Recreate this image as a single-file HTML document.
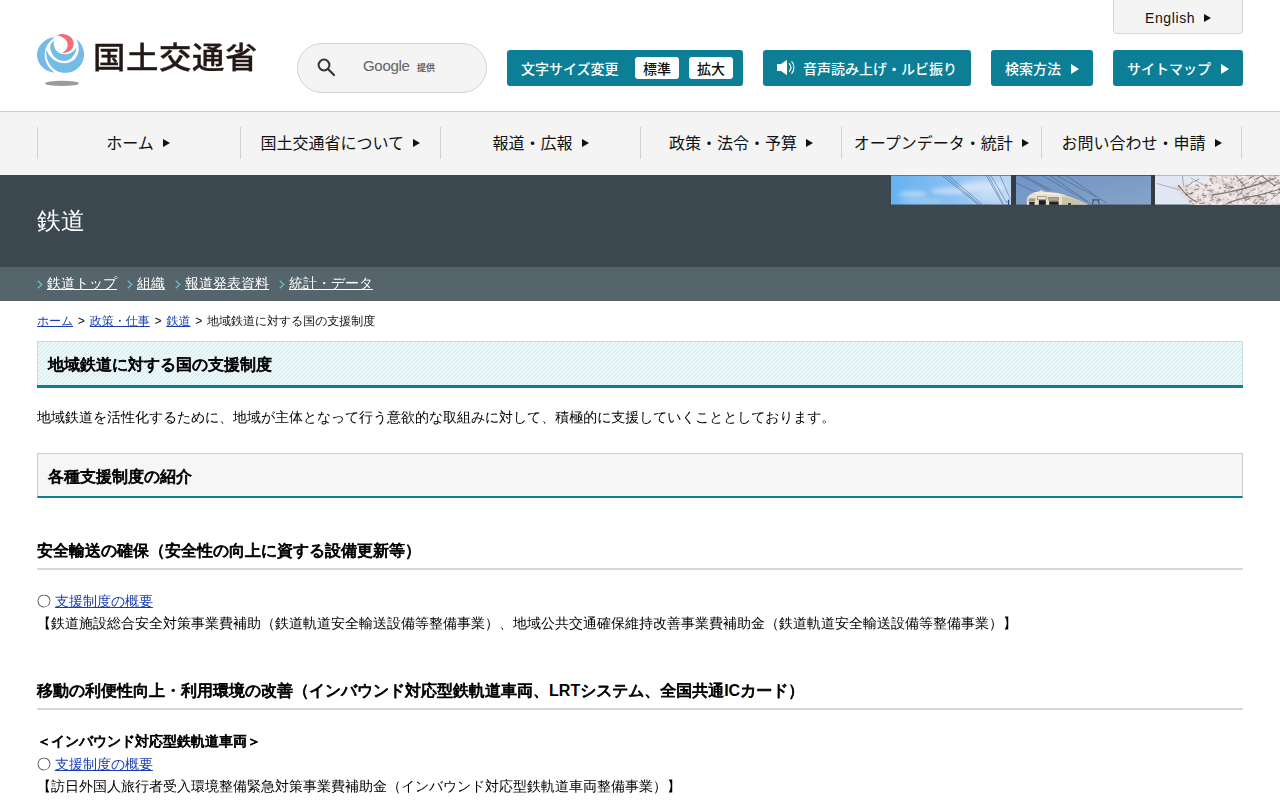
<!DOCTYPE html>
<html lang="ja">
<head>
<meta charset="utf-8">
<title>鉄道：地域鉄道に対する国の支援制度 - 国土交通省</title>
<style>
*{box-sizing:border-box;margin:0;padding:0}
html,body{width:1280px;height:800px;overflow:hidden;background:#fff}
body{font-family:"Liberation Sans","WenQuanYi Zen Hei",sans-serif;font-size:14px;color:#000;position:relative}
a{color:#1a3eaf;text-decoration:underline}
.noto{font-family:"Liberation Sans","Noto Sans CJK JP",sans-serif}

/* ---------- header ---------- */
#hd{position:absolute;left:0;top:0;width:1280px;height:111px;background:#fff}
#logo{position:absolute;left:37px;top:30px;width:225px;height:60px}
#logotxt{position:absolute;left:93px;top:35.6px;font-family:"Liberation Sans","Noto Sans CJK JP",sans-serif;font-weight:500;font-size:32.4px;line-height:46px;color:#231815;letter-spacing:.6px;white-space:nowrap;transform:scaleY(.93);transform-origin:0 0;-webkit-text-stroke:.35px #231815}
#search{position:absolute;left:297px;top:43px;width:190px;height:50px;border:1px solid #d2d2d2;border-radius:25px;background:#f4f4f4}
#search svg{position:absolute;left:17.6px;top:13.4px}
#search .g{position:absolute;left:65px;top:12px;font-family:"Liberation Sans",sans-serif;font-size:15px;line-height:20px;color:#5f6368;letter-spacing:-.3px}
#search .t{position:absolute;left:119px;top:16px;font-family:"Liberation Sans","Noto Sans CJK JP",sans-serif;font-size:9px;font-weight:700;line-height:16px;color:#5f6368}
.btn{position:absolute;top:50px;height:36px;background:#0c7f96;border-radius:3px;color:#fff;font-family:"Liberation Sans","Noto Sans CJK JP",sans-serif;font-size:14px;font-weight:500;line-height:38px;white-space:nowrap}
.btn .tri{display:inline-block;width:0;height:0;border-left:8px solid #fff;border-top:5px solid transparent;border-bottom:5px solid transparent;vertical-align:middle;margin-left:10px;position:relative;top:-1px}
#fs{left:507px;width:236px}
#fs .lb{position:absolute;left:14px;top:0}
#fs .b{position:absolute;top:7px;width:44px;height:22px;background:#fff;border-radius:3px;color:#111;font-size:14px;line-height:24px;text-align:center;font-weight:500}
#au{left:763px;width:208px}
#au svg{position:absolute;left:13px;top:8px}
#au .lb{position:absolute;left:40px;top:0}
#sm{left:991px;width:102px;padding-left:14px}
#mp{left:1113px;width:130px;padding-left:14px}
#en{position:absolute;left:1113px;top:-1px;width:130px;height:35px;background:#f4f4f4;border:1px solid #d6d6d6;border-radius:0 0 3px 3px;font-family:"Liberation Sans","Noto Sans CJK JP",sans-serif;font-size:14px;line-height:37px;color:#111;padding-left:31px;letter-spacing:.6px}
#en .tri{display:inline-block;width:0;height:0;border-left:7px solid #111;border-top:4px solid transparent;border-bottom:4px solid transparent;vertical-align:middle;margin-left:9px;position:relative;top:-1px}

/* ---------- global nav ---------- */
#gn{position:absolute;left:0;top:111px;width:1280px;height:64px;background:#f4f4f4;border-top:1px solid #cfcfcf}
#gn ul{position:absolute;left:37.3px;top:15px;width:1205px;height:32px;list-style:none;display:flex}
#gn li:last-child{border-right:1px solid #d2d2d2}
#gn li:first-child{padding-right:2px}
#gn li{flex:1 1 0;height:32px;border-left:1px solid #d2d2d2;text-align:center;font-family:"Liberation Sans","Noto Sans CJK JP",sans-serif;font-size:16px;line-height:33px;color:#111;white-space:nowrap}
#gn li .tri{display:inline-block;width:0;height:0;border-left:7px solid #111;border-top:4px solid transparent;border-bottom:4px solid transparent;vertical-align:middle;margin-left:9px;position:relative;top:-2px}

/* ---------- title band ---------- */
#tb{position:absolute;left:0;top:175px;width:1280px;height:92px;background:#3c484f}
#tb h1{position:absolute;left:37px;top:30px;font-size:24px;line-height:32px;font-weight:400;color:#fff}
#ph{position:absolute;left:891px;top:0;width:389px;height:30px}
#sn{position:absolute;left:0;top:267px;width:1280px;height:34px;background:#56646b;color:#fff;font-size:14px;line-height:34px;white-space:nowrap}
#sn a{color:#fff;position:absolute;top:-1px}
#sn .cv{position:absolute;top:12.6px;width:6px;height:9px;margin-left:-.5px}
#sn .cv path{fill:none;stroke:#5cc6d3;stroke-width:1.2}

/* ---------- content ---------- */
#bc{position:absolute;left:37px;top:312px;font-size:12px;line-height:18px;white-space:nowrap;color:#111;word-spacing:1.5px}
#h1{position:absolute;left:37px;top:341px;width:1206px;height:44px;border:1px solid #c3dfe3;border-bottom:0;background:#e6f2f4;font-size:16px;font-weight:700;line-height:45px;padding-left:10px;color:#000}
#h1:after{content:"";position:absolute;left:-1px;right:-1px;top:43px;height:3px;background:#0c7f96}
#h1 svg{position:absolute;left:0;top:0;width:1204px;height:43px}
#h1 span{position:relative}
#p1{position:absolute;left:37px;top:407px;font-size:14px;line-height:21px;white-space:nowrap}
#h2{position:absolute;left:37px;top:453px;width:1206px;height:45px;border:1px solid #ccc;border-bottom:2px solid #0c7f96;background:#f6f6f6;font-size:16px;font-weight:700;line-height:46px;padding-left:10px;color:#000}
.h3{position:absolute;left:37px;width:1206px;border-bottom:2px solid #d8d8d8;font-size:16px;font-weight:700;line-height:24px;padding-bottom:5px;color:#000;white-space:nowrap}
.sym{font-family:"WenQuanYi Zen Hei",sans-serif}
#h1,#h2,.h3{-webkit-text-stroke:.85px #000}
.tx b{-webkit-text-stroke:.8px #000}
.la{-webkit-text-stroke:0}
.k{letter-spacing:-.0234em}
.tx{position:absolute;left:37px;font-size:14px;line-height:22px;white-space:nowrap}
</style>
</head>
<body>

<div id="hd">
  <svg id="logo" viewBox="37 30 225 60">
    <path fill="#74bbe6" d="M54.9,37.3 C44,38 37,46.5 37,55.1 C37,64.5 45,72 54.9,72.8 C48.5,68.5 44.6,61.5 44.7,54.5 C44.8,47.5 48.5,41.5 54.9,37.3 Z"/>
    <path fill="#74bbe6" d="M46.3,49.3 C45.8,54 46.5,59 49,63.5 C52.5,69.5 58.5,72.8 65.3,72.8 C76,72.8 84.1,64.5 84.1,54.4 C84.1,48 81,42.5 76.2,39.2 C78,42 78.9,46 78.7,50 C78.3,57.5 72,63.3 64.6,63.3 C56,63.3 48.5,57 46.3,49.3 Z"/>
    <path fill="#74bbe6" d="M53.9,40.8 C51.5,42.5 50,45 50.2,47.5 C50.6,54 56,60.9 63.5,60.9 C70.5,60.9 76,55 76.6,46.4 C75.5,49 73.5,51.5 70.8,52.9 C67,54.8 62,54.8 58.5,52.6 C55,50.3 53.3,46 53.9,40.8 Z"/>
    <path fill="#ef6d78" d="M56.8,35.5 C60,33.2 66,33.2 70,36.5 C74.5,40.2 75,46 71,50 C68.5,52.3 65,53.3 62.1,53 C65.5,51.5 67.8,48.5 67.6,44.5 C67.4,40 63,36 56.8,35.5 Z"/>
    <ellipse cx="62" cy="83.4" rx="16.9" ry="2.6" fill="#9b9b9b"/>
  </svg>
  <div id="logotxt">国土交通省</div>
  <div id="search">
    <svg width="20" height="20" viewBox="0 0 20 20"><circle cx="8" cy="8" r="5.4" fill="none" stroke="#333" stroke-width="2"/><path d="M12 12 L18 18" stroke="#333" stroke-width="2.2" stroke-linecap="round"/></svg>
    <span class="g">Google</span><span class="t">提供</span>
  </div>
  <div class="btn" id="fs"><span class="lb">文字サイズ変更</span><span class="b" style="left:128px">標準</span><span class="b" style="left:182px">拡大</span></div>
  <div class="btn" id="au"><svg width="22" height="18" viewBox="776 58 22 18"><path fill="#fff" d="M777 64h4l6-4.2v15.4l-6-4.2h-4z"/><path d="M789.3 63.6a6 6 0 0 1 0 7.8M791.8 61.6a9.2 9.2 0 0 1 0 11.8" fill="none" stroke="#fff" stroke-width="1.1" stroke-linecap="round"/></svg><span class="lb">音声読み上げ・ルビ振り</span></div>
  <div class="btn" id="sm">検索方法<span class="tri"></span></div>
  <div class="btn" id="mp">サイトマップ<span class="tri"></span></div>
  <div id="en">English<span class="tri"></span></div>
</div>

<div id="gn">
  <ul>
    <li>ホーム<span class="tri"></span></li>
    <li>国土交通省について<span class="tri"></span></li>
    <li>報道・広報<span class="tri"></span></li>
    <li>政策・法令・予算<span class="tri"></span></li>
    <li>オープンデータ・統計<span class="tri"></span></li>
    <li>お問い合わせ・申請<span class="tri"></span></li>
  </ul>
</div>

<div id="tb">
  <h1>鉄道</h1>
  <svg id="ph" viewBox="0 0 389 30"><defs><linearGradient id="s1" x1="0" y1="0" x2="1" y2="0"><stop offset="0" stop-color="#66b2f0"/><stop offset=".45" stop-color="#86bef1"/><stop offset="1" stop-color="#bcd6f5"/></linearGradient><linearGradient id="s2" x1="0" y1="0" x2="1" y2="1"><stop offset="0" stop-color="#6d94c8"/><stop offset=".55" stop-color="#7d9cc6"/><stop offset="1" stop-color="#86a4ca"/></linearGradient><filter id="b1" x="-20%" y="-50%" width="140%" height="200%"><feGaussianBlur stdDeviation="2.2"/></filter><filter id="b2"><feGaussianBlur stdDeviation=".45"/></filter><filter id="b3" x="-10%" y="-30%" width="120%" height="160%"><feGaussianBlur stdDeviation="1.1"/></filter><clipPath id="c1"><rect x="0" y="0" width="120.2" height="29.7"/></clipPath><clipPath id="c2"><rect x="125" y="0" width="135" height="29.7"/></clipPath><clipPath id="c3"><rect x="264" y="0" width="125" height="29.7"/></clipPath></defs><rect x="120" y="0" width="5.2" height="29.7" fill="#353b40"/><rect x="259.8" y="0" width="4.4" height="29.7" fill="#353b40"/><g clip-path="url(#c1)"><rect x="0" y="0" width="120.2" height="29.7" fill="url(#s1)"/><g filter="url(#b1)" fill="#dbe9f8"><ellipse cx="22" cy="19" rx="14" ry="2.6" opacity=".75"/><ellipse cx="60" cy="16" rx="20" ry="3.2" opacity=".7"/><ellipse cx="92" cy="12" rx="24" ry="6" opacity=".75"/><ellipse cx="100" cy="22" rx="22" ry="4" opacity=".45"/><ellipse cx="30" cy="26" rx="22" ry="2.5" opacity=".4"/></g><g stroke="#27406e" stroke-width=".5" fill="none" opacity=".8"><path d="M50.3 0.0 L87.4 29.7"/><path d="M53.4 0.0 L88.9 29.7"/><path d="M56.9 0.0 L91.5 29.7"/><path d="M95.0 0.0 L111.8 29.7"/><path d="M97.0 0.0 L112.8 29.7"/><path d="M99.6 0.0 L115.8 28.0"/><path d="M108.7 0.0 L119.6 24.6"/></g><path d="M117.5 24.7 V30" stroke="#1d3c78" stroke-width="1.2"/><path d="M115.6 26.5 h3.4" stroke="#5d7fb5" stroke-width=".7"/><rect x="0" y="0" width="120.2" height=".8" fill="#2d5f9e" opacity=".8"/></g><g clip-path="url(#c2)"><rect x="125" y="0" width="135" height="29.7" fill="url(#s2)"/><g stroke="#2c3a55" stroke-width=".5" fill="none" opacity=".65"><path d="M129.5 0.5 L157.7 15.2"/><path d="M133.0 0.5 L160.0 15.2"/><path d="M151.8 0.5 L196.3 26.9"/><path d="M165.9 0.5 L205.7 22.2"/><path d="M175.3 0.5 L216.3 28.6"/><path d="M124.9 8.1 L144.8 16.9"/><path d="M159.0 0.5 L199.0 28.0"/></g><g filter="url(#b2)"><path fill="#e9e1c8" d="M135.8 30.0 L135.8 24.5 C136.5 20.5 140.0 18.0 148.0 16.6 L149.5 15.3 L151.8 15.4 L152.6 16.6 C165.0 17.6 179.0 20.5 197.5 30.0 L197.5 30.0 Z"/><path fill="#f3eedd" d="M142.0 17.6 L165.0 17.8 L175.0 20.0 L145.0 19.0 Z"/><path fill="#cdc3a6" d="M171.0 21.2 L185.0 24.6 L196.5 30.0 L171.0 30.0 Z"/><rect x="137.6" y="23.4" width="6.6" height="3" fill="#9a9a90"/><rect x="146.6" y="21.8" width="8.6" height="2.8" fill="#efe7cf" stroke="#5b5546" stroke-width=".5"/><rect x="157.8" y="22.4" width="9.8" height="3.2" fill="#a9a79d" stroke="#5b5546" stroke-width=".4"/><rect x="138.2" y="26.9" width="5.4" height="3.2" fill="#2c2c2a"/><rect x="147.8" y="25.2" width="7" height="5" fill="#1f1f1e"/><rect x="158.2" y="26.4" width="9.4" height="3.6" fill="#24241f"/><rect x="177.0" y="28.0" width="3" height="2" fill="#3b3a33"/></g><g stroke="#2b3547" stroke-width=".8" fill="none"><path d="M201.0 24.9 h7.8"/><path d="M202.5 25.0 l-1.2 4.6M207.0 25.0 l1.4 4.6"/></g><rect x="125" y="0" width="135" height=".8" fill="#26354f" opacity=".85"/></g><g clip-path="url(#c3)"><rect x="264" y="0" width="125" height="29.7" fill="#dfe8f4"/><g filter="url(#b3)"><path fill="#e4dbdb" d="M323.0 -1.0 L391.0 -1.0 L391.0 31.0 L301.0 31.0 L295.0 24.0 L285.0 15.0 L279.0 11.0 L291.0 9.0 L312.0 9.0 Z"/></g><g fill="#9c8a86" opacity=".75" filter="url(#b2)"><circle cx="362.7" cy="30.9" r="1.2"/><circle cx="319.9" cy="4.9" r="1.2"/><circle cx="364.1" cy="0.0" r="1.0"/><circle cx="325.1" cy="11.0" r="0.8"/><circle cx="314.7" cy="10.2" r="1.3"/><circle cx="307.0" cy="10.4" r="1.2"/><circle cx="372.1" cy="12.8" r="0.5"/><circle cx="335.2" cy="10.9" r="1.2"/><circle cx="305.5" cy="10.7" r="1.2"/><circle cx="288.2" cy="12.1" r="1.1"/><circle cx="366.3" cy="0.3" r="0.5"/><circle cx="312.2" cy="22.9" r="1.2"/><circle cx="320.9" cy="7.7" r="1.3"/><circle cx="350.4" cy="7.4" r="1.1"/><circle cx="318.5" cy="7.8" r="0.5"/><circle cx="365.1" cy="28.3" r="1.0"/><circle cx="385.0" cy="-0.2" r="0.7"/><circle cx="335.4" cy="29.6" r="1.3"/><circle cx="326.0" cy="7.0" r="0.8"/><circle cx="337.3" cy="28.7" r="0.6"/><circle cx="370.1" cy="22.6" r="1.2"/><circle cx="366.9" cy="18.4" r="0.8"/><circle cx="318.9" cy="10.6" r="1.1"/><circle cx="364.8" cy="6.9" r="0.6"/><circle cx="319.5" cy="30.4" r="1.2"/><circle cx="389.7" cy="7.5" r="0.6"/><circle cx="295.2" cy="15.0" r="1.1"/><circle cx="332.4" cy="6.5" r="0.8"/><circle cx="350.8" cy="20.6" r="1.1"/><circle cx="374.8" cy="20.3" r="0.6"/><circle cx="374.1" cy="8.4" r="1.0"/><circle cx="324.5" cy="22.6" r="0.7"/><circle cx="311.2" cy="6.9" r="0.6"/><circle cx="378.7" cy="17.5" r="0.8"/><circle cx="327.0" cy="30.8" r="0.9"/><circle cx="309.5" cy="24.9" r="1.0"/><circle cx="390.0" cy="2.3" r="0.9"/><circle cx="371.8" cy="25.9" r="1.2"/><circle cx="388.1" cy="17.7" r="1.2"/><circle cx="324.5" cy="26.7" r="0.9"/><circle cx="312.6" cy="23.9" r="1.3"/><circle cx="296.2" cy="18.1" r="1.0"/><circle cx="308.1" cy="10.8" r="0.6"/><circle cx="306.6" cy="7.2" r="1.0"/><circle cx="354.1" cy="5.5" r="0.5"/><circle cx="319.7" cy="20.7" r="0.6"/><circle cx="318.1" cy="5.5" r="1.1"/><circle cx="343.1" cy="1.0" r="0.6"/><circle cx="326.9" cy="16.6" r="1.0"/><circle cx="358.7" cy="12.1" r="0.7"/><circle cx="317.6" cy="29.5" r="0.7"/><circle cx="345.1" cy="10.4" r="0.8"/><circle cx="376.6" cy="30.9" r="0.8"/><circle cx="305.9" cy="22.3" r="0.7"/><circle cx="329.9" cy="25.3" r="0.8"/><circle cx="378.6" cy="13.7" r="0.6"/><circle cx="352.9" cy="28.1" r="0.6"/><circle cx="351.0" cy="10.9" r="0.9"/><circle cx="300.5" cy="8.1" r="0.9"/><circle cx="383.1" cy="2.5" r="0.9"/><circle cx="370.3" cy="29.9" r="0.7"/><circle cx="388.4" cy="14.4" r="0.5"/><circle cx="383.2" cy="11.4" r="1.2"/><circle cx="350.8" cy="25.4" r="0.6"/><circle cx="368.3" cy="6.1" r="0.8"/><circle cx="374.7" cy="25.5" r="0.6"/><circle cx="308.1" cy="11.8" r="0.9"/><circle cx="325.7" cy="2.9" r="0.7"/><circle cx="361.8" cy="27.7" r="0.5"/><circle cx="344.6" cy="23.2" r="0.5"/><circle cx="373.8" cy="2.8" r="1.0"/><circle cx="343.3" cy="19.1" r="0.7"/><circle cx="329.5" cy="17.6" r="0.8"/><circle cx="354.8" cy="13.3" r="0.9"/><circle cx="336.9" cy="6.5" r="1.1"/><circle cx="367.7" cy="13.7" r="0.6"/><circle cx="335.2" cy="2.4" r="0.6"/><circle cx="330.6" cy="1.9" r="0.9"/><circle cx="339.1" cy="0.3" r="1.0"/><circle cx="367.4" cy="15.4" r="0.5"/><circle cx="338.4" cy="11.1" r="1.3"/><circle cx="299.4" cy="26.4" r="1.3"/><circle cx="362.6" cy="25.1" r="0.7"/><circle cx="389.1" cy="14.7" r="1.3"/><circle cx="382.1" cy="4.3" r="1.1"/><circle cx="383.6" cy="1.1" r="0.8"/><circle cx="365.2" cy="4.1" r="1.2"/><circle cx="314.1" cy="25.1" r="0.6"/><circle cx="338.2" cy="28.4" r="0.7"/><circle cx="312.9" cy="15.2" r="0.8"/><circle cx="302.1" cy="29.0" r="1.0"/><circle cx="379.9" cy="4.4" r="1.1"/><circle cx="297.2" cy="16.0" r="1.0"/><circle cx="323.1" cy="26.9" r="0.9"/><circle cx="346.5" cy="27.2" r="0.6"/><circle cx="390.3" cy="19.2" r="0.8"/><circle cx="369.6" cy="7.5" r="1.3"/><circle cx="346.2" cy="10.5" r="1.1"/><circle cx="331.9" cy="4.7" r="1.1"/><circle cx="311.9" cy="19.5" r="1.3"/><circle cx="347.1" cy="20.2" r="0.8"/><circle cx="300.8" cy="18.7" r="0.8"/><circle cx="339.3" cy="27.7" r="0.6"/><circle cx="309.1" cy="19.9" r="0.5"/><circle cx="296.3" cy="10.4" r="0.7"/><circle cx="346.9" cy="17.9" r="0.7"/><circle cx="351.1" cy="14.2" r="0.6"/><circle cx="384.3" cy="6.8" r="0.6"/><circle cx="295.2" cy="19.4" r="1.2"/><circle cx="367.9" cy="11.9" r="0.7"/><circle cx="344.6" cy="10.2" r="1.0"/><circle cx="332.0" cy="29.0" r="1.1"/><circle cx="311.3" cy="27.9" r="0.5"/><circle cx="341.3" cy="12.0" r="0.7"/><circle cx="384.7" cy="3.6" r="0.7"/><circle cx="349.5" cy="15.2" r="1.0"/><circle cx="371.2" cy="4.6" r="0.7"/><circle cx="379.3" cy="24.1" r="1.1"/><circle cx="364.0" cy="13.9" r="1.1"/><circle cx="333.0" cy="6.2" r="0.6"/><circle cx="320.6" cy="23.0" r="1.1"/><circle cx="374.6" cy="21.8" r="0.7"/><circle cx="343.7" cy="13.0" r="1.1"/><circle cx="340.5" cy="7.5" r="1.0"/><circle cx="387.3" cy="5.9" r="1.2"/><circle cx="310.0" cy="22.8" r="1.3"/><circle cx="364.1" cy="9.5" r="1.2"/><circle cx="319.8" cy="6.7" r="1.2"/><circle cx="351.9" cy="21.2" r="1.0"/><circle cx="388.8" cy="14.0" r="1.2"/><circle cx="358.9" cy="26.4" r="0.8"/><circle cx="361.8" cy="17.3" r="0.7"/><circle cx="307.5" cy="18.9" r="0.6"/><circle cx="381.5" cy="3.6" r="0.5"/><circle cx="321.6" cy="3.5" r="0.5"/><circle cx="352.2" cy="21.3" r="1.1"/><circle cx="292.0" cy="17.9" r="0.8"/><circle cx="371.7" cy="25.2" r="1.2"/><circle cx="381.9" cy="29.2" r="0.6"/><circle cx="371.1" cy="19.3" r="1.2"/><circle cx="351.9" cy="8.2" r="0.6"/><circle cx="306.7" cy="9.2" r="0.8"/><circle cx="315.0" cy="21.9" r="0.8"/><circle cx="319.0" cy="29.8" r="0.9"/><circle cx="375.2" cy="18.8" r="0.5"/><circle cx="328.8" cy="13.0" r="1.1"/><circle cx="321.8" cy="21.5" r="0.9"/><circle cx="308.0" cy="26.6" r="0.6"/><circle cx="371.9" cy="4.5" r="0.5"/><circle cx="306.4" cy="23.4" r="1.3"/><circle cx="337.1" cy="24.5" r="0.6"/><circle cx="337.4" cy="10.1" r="1.2"/><circle cx="312.6" cy="29.2" r="0.7"/><circle cx="307.8" cy="21.4" r="0.9"/><circle cx="296.7" cy="19.4" r="0.6"/><circle cx="368.5" cy="21.3" r="1.1"/><circle cx="351.6" cy="10.4" r="0.8"/><circle cx="326.8" cy="27.5" r="0.6"/><circle cx="379.2" cy="-0.2" r="0.7"/><circle cx="312.9" cy="27.8" r="0.9"/><circle cx="325.2" cy="27.3" r="0.7"/><circle cx="333.9" cy="16.0" r="1.1"/><circle cx="364.8" cy="19.7" r="0.8"/><circle cx="319.6" cy="4.0" r="1.2"/><circle cx="355.2" cy="22.7" r="0.6"/><circle cx="331.5" cy="23.7" r="1.0"/><circle cx="298.4" cy="13.8" r="1.2"/><circle cx="310.2" cy="5.1" r="0.7"/><circle cx="359.5" cy="26.0" r="0.6"/><circle cx="301.5" cy="6.9" r="0.8"/><circle cx="340.4" cy="4.1" r="0.8"/><circle cx="305.1" cy="30.2" r="1.1"/><circle cx="295.8" cy="11.3" r="1.3"/><circle cx="369.3" cy="22.5" r="0.8"/><circle cx="305.8" cy="19.4" r="0.6"/><circle cx="306.9" cy="11.4" r="0.5"/><circle cx="327.3" cy="24.3" r="1.1"/><circle cx="338.1" cy="19.2" r="0.9"/><circle cx="300.0" cy="18.3" r="0.8"/><circle cx="363.5" cy="28.1" r="0.8"/><circle cx="345.8" cy="23.0" r="0.8"/><circle cx="309.2" cy="22.1" r="1.2"/><circle cx="367.0" cy="21.4" r="1.2"/><circle cx="357.0" cy="19.5" r="0.9"/><circle cx="318.2" cy="19.1" r="0.6"/><circle cx="329.5" cy="24.0" r="1.1"/><circle cx="351.7" cy="7.0" r="0.8"/><circle cx="333.3" cy="18.9" r="0.8"/><circle cx="356.6" cy="28.8" r="0.6"/><circle cx="354.4" cy="23.9" r="0.8"/><circle cx="336.9" cy="30.2" r="0.5"/><circle cx="342.6" cy="4.1" r="1.1"/><circle cx="384.7" cy="15.6" r="0.6"/><circle cx="345.9" cy="16.3" r="1.1"/><circle cx="339.3" cy="19.5" r="1.2"/><circle cx="340.3" cy="12.1" r="1.3"/><circle cx="307.3" cy="20.9" r="0.8"/></g><g fill="#f4efef" opacity=".85" filter="url(#b2)"><circle cx="316.6" cy="3.8" r="1.6"/><circle cx="321.2" cy="0.9" r="1.4"/><circle cx="327.7" cy="25.5" r="0.9"/><circle cx="305.6" cy="19.1" r="1.9"/><circle cx="344.5" cy="11.7" r="2.0"/><circle cx="312.9" cy="3.6" r="0.9"/><circle cx="314.9" cy="25.1" r="1.0"/><circle cx="345.0" cy="19.4" r="1.2"/><circle cx="341.3" cy="1.0" r="0.9"/><circle cx="303.7" cy="20.8" r="1.3"/><circle cx="315.6" cy="17.7" r="1.3"/><circle cx="314.0" cy="24.4" r="1.6"/><circle cx="307.9" cy="17.4" r="1.4"/><circle cx="377.3" cy="22.3" r="1.1"/><circle cx="388.8" cy="2.8" r="1.3"/><circle cx="364.3" cy="3.9" r="1.4"/><circle cx="365.1" cy="17.3" r="1.9"/><circle cx="315.5" cy="21.2" r="1.5"/><circle cx="344.8" cy="13.6" r="1.8"/><circle cx="384.9" cy="14.2" r="1.6"/><circle cx="352.2" cy="30.8" r="1.8"/><circle cx="312.3" cy="11.3" r="1.6"/><circle cx="324.0" cy="26.9" r="0.9"/><circle cx="330.4" cy="16.6" r="1.9"/><circle cx="371.1" cy="26.6" r="1.1"/><circle cx="326.7" cy="10.5" r="1.9"/><circle cx="386.4" cy="3.8" r="1.0"/><circle cx="306.5" cy="6.5" r="1.4"/><circle cx="345.8" cy="7.4" r="0.8"/><circle cx="327.1" cy="10.8" r="1.5"/><circle cx="385.8" cy="21.1" r="1.4"/><circle cx="348.9" cy="20.6" r="0.9"/><circle cx="379.9" cy="24.0" r="1.8"/><circle cx="368.8" cy="11.6" r="1.3"/><circle cx="292.4" cy="19.3" r="0.9"/><circle cx="298.9" cy="9.9" r="0.9"/><circle cx="292.2" cy="10.6" r="0.8"/><circle cx="377.2" cy="18.7" r="1.0"/><circle cx="308.7" cy="10.1" r="1.2"/><circle cx="390.2" cy="13.9" r="1.4"/><circle cx="318.7" cy="7.5" r="1.8"/><circle cx="385.6" cy="15.9" r="1.0"/><circle cx="340.7" cy="-0.1" r="1.4"/><circle cx="388.6" cy="26.6" r="1.6"/><circle cx="309.7" cy="10.7" r="1.0"/><circle cx="365.9" cy="16.0" r="1.7"/><circle cx="317.3" cy="6.1" r="1.8"/><circle cx="389.3" cy="26.3" r="1.8"/><circle cx="371.0" cy="22.7" r="1.1"/><circle cx="337.9" cy="10.4" r="0.8"/><circle cx="309.5" cy="21.2" r="1.9"/><circle cx="330.2" cy="29.0" r="2.0"/><circle cx="386.1" cy="10.7" r="1.1"/><circle cx="306.0" cy="5.3" r="1.0"/><circle cx="349.6" cy="27.8" r="1.8"/><circle cx="333.7" cy="19.9" r="1.8"/><circle cx="381.1" cy="24.0" r="1.7"/><circle cx="333.6" cy="4.7" r="1.7"/><circle cx="317.6" cy="24.6" r="2.0"/><circle cx="324.5" cy="11.8" r="1.9"/><circle cx="360.7" cy="4.4" r="1.0"/><circle cx="369.7" cy="3.7" r="1.8"/><circle cx="388.8" cy="20.0" r="1.2"/><circle cx="341.4" cy="3.2" r="0.8"/><circle cx="387.8" cy="19.8" r="1.4"/><circle cx="383.7" cy="12.9" r="1.8"/><circle cx="371.9" cy="5.8" r="1.1"/><circle cx="313.2" cy="6.7" r="1.5"/><circle cx="309.5" cy="12.4" r="1.0"/><circle cx="381.1" cy="10.3" r="1.3"/><circle cx="345.2" cy="27.9" r="1.3"/><circle cx="381.9" cy="15.1" r="1.4"/><circle cx="338.6" cy="-0.4" r="1.3"/><circle cx="368.9" cy="4.5" r="1.4"/><circle cx="360.8" cy="16.8" r="1.2"/><circle cx="338.0" cy="16.8" r="1.7"/><circle cx="292.7" cy="16.9" r="1.1"/><circle cx="311.5" cy="23.7" r="1.4"/><circle cx="342.8" cy="23.3" r="1.9"/><circle cx="329.8" cy="18.6" r="1.4"/><circle cx="337.3" cy="21.2" r="1.3"/><circle cx="339.7" cy="14.3" r="1.9"/><circle cx="357.9" cy="27.0" r="1.9"/><circle cx="309.6" cy="16.9" r="1.9"/><circle cx="373.4" cy="3.4" r="0.9"/><circle cx="329.6" cy="1.3" r="1.1"/><circle cx="367.2" cy="27.7" r="1.0"/><circle cx="359.8" cy="20.1" r="1.0"/><circle cx="378.1" cy="30.0" r="1.1"/><circle cx="385.8" cy="11.7" r="1.4"/><circle cx="389.9" cy="25.6" r="1.0"/><circle cx="328.5" cy="15.5" r="1.2"/><circle cx="302.5" cy="9.2" r="1.7"/><circle cx="329.5" cy="-0.4" r="1.2"/><circle cx="349.6" cy="15.4" r="0.9"/><circle cx="389.4" cy="24.2" r="2.0"/><circle cx="327.4" cy="28.2" r="1.8"/><circle cx="309.4" cy="3.8" r="1.9"/><circle cx="343.8" cy="21.4" r="0.9"/><circle cx="327.8" cy="1.3" r="1.9"/><circle cx="350.8" cy="24.7" r="0.9"/><circle cx="375.2" cy="1.1" r="1.8"/><circle cx="330.9" cy="9.9" r="1.5"/><circle cx="382.9" cy="7.6" r="1.0"/><circle cx="339.0" cy="6.6" r="0.9"/><circle cx="303.2" cy="9.0" r="1.2"/><circle cx="364.5" cy="8.3" r="1.4"/><circle cx="300.6" cy="10.1" r="0.8"/><circle cx="361.6" cy="16.6" r="1.0"/><circle cx="333.2" cy="28.9" r="0.9"/><circle cx="371.1" cy="12.8" r="1.4"/><circle cx="372.8" cy="11.6" r="1.4"/><circle cx="356.7" cy="30.4" r="1.2"/><circle cx="372.6" cy="21.6" r="1.6"/><circle cx="325.5" cy="10.1" r="0.9"/><circle cx="362.5" cy="7.2" r="1.0"/><circle cx="376.8" cy="20.5" r="1.1"/><circle cx="307.6" cy="8.4" r="1.4"/><circle cx="298.3" cy="13.3" r="1.1"/><circle cx="386.8" cy="30.1" r="1.5"/><circle cx="307.9" cy="29.9" r="1.2"/><circle cx="323.0" cy="14.2" r="1.4"/><circle cx="303.1" cy="15.2" r="0.8"/><circle cx="324.9" cy="0.3" r="0.8"/><circle cx="314.5" cy="6.4" r="1.5"/><circle cx="339.2" cy="23.0" r="1.6"/><circle cx="359.8" cy="27.1" r="1.3"/><circle cx="316.9" cy="30.5" r="1.0"/><circle cx="360.7" cy="19.6" r="0.9"/><circle cx="372.9" cy="27.5" r="1.6"/><circle cx="361.7" cy="25.0" r="1.0"/><circle cx="338.6" cy="15.1" r="1.8"/><circle cx="369.5" cy="25.4" r="1.5"/><circle cx="379.2" cy="20.9" r="1.6"/><circle cx="295.6" cy="10.5" r="0.9"/><circle cx="372.9" cy="16.9" r="1.6"/><circle cx="349.9" cy="20.8" r="1.4"/><circle cx="363.3" cy="15.1" r="1.4"/><circle cx="353.5" cy="1.1" r="1.7"/><circle cx="310.2" cy="22.3" r="1.0"/><circle cx="362.4" cy="30.2" r="1.4"/><circle cx="323.1" cy="14.3" r="1.6"/><circle cx="365.4" cy="18.7" r="1.6"/><circle cx="308.9" cy="22.8" r="1.2"/><circle cx="343.5" cy="-0.6" r="0.9"/><circle cx="310.6" cy="20.5" r="1.6"/><circle cx="355.3" cy="8.3" r="1.4"/><circle cx="332.1" cy="13.9" r="0.9"/><circle cx="379.3" cy="5.4" r="2.0"/><circle cx="384.0" cy="-0.4" r="1.4"/><circle cx="371.2" cy="30.0" r="1.3"/><circle cx="310.6" cy="5.7" r="1.9"/><circle cx="304.2" cy="17.6" r="1.0"/><circle cx="338.6" cy="29.5" r="1.0"/><circle cx="371.2" cy="15.3" r="1.9"/><circle cx="358.4" cy="6.4" r="1.9"/><circle cx="334.5" cy="-0.2" r="0.8"/><circle cx="335.1" cy="13.4" r="1.2"/><circle cx="296.5" cy="10.0" r="1.2"/><circle cx="373.4" cy="-0.9" r="1.7"/><circle cx="373.3" cy="2.8" r="1.9"/><circle cx="359.4" cy="27.9" r="1.1"/><circle cx="321.9" cy="11.6" r="2.0"/><circle cx="345.8" cy="10.5" r="1.3"/><circle cx="312.4" cy="28.9" r="1.1"/><circle cx="310.2" cy="15.4" r="1.0"/><circle cx="322.1" cy="29.6" r="1.9"/><circle cx="370.3" cy="19.2" r="1.9"/><circle cx="384.5" cy="16.6" r="1.7"/><circle cx="330.6" cy="23.1" r="1.6"/><circle cx="382.9" cy="3.1" r="1.4"/><circle cx="318.8" cy="8.5" r="1.7"/><circle cx="388.4" cy="7.3" r="1.6"/><circle cx="314.1" cy="16.8" r="1.3"/><circle cx="303.9" cy="28.0" r="1.4"/><circle cx="305.2" cy="28.0" r="2.0"/><circle cx="330.5" cy="3.5" r="1.0"/><circle cx="291.0" cy="9.9" r="0.9"/><circle cx="307.3" cy="7.3" r="1.5"/><circle cx="378.6" cy="23.0" r="1.3"/><circle cx="326.5" cy="15.8" r="1.3"/><circle cx="311.5" cy="30.0" r="1.0"/><circle cx="336.4" cy="19.1" r="1.8"/><circle cx="304.8" cy="7.7" r="1.1"/><circle cx="325.0" cy="13.3" r="1.9"/><circle cx="374.4" cy="26.9" r="0.8"/><circle cx="379.5" cy="14.1" r="1.5"/><circle cx="383.0" cy="25.4" r="1.8"/><circle cx="387.9" cy="7.0" r="0.9"/><circle cx="298.0" cy="15.7" r="1.6"/><circle cx="384.6" cy="22.1" r="1.6"/><circle cx="365.1" cy="13.6" r="1.5"/><circle cx="306.6" cy="28.4" r="1.6"/><circle cx="314.4" cy="3.1" r="1.1"/><circle cx="351.0" cy="21.4" r="0.9"/><circle cx="345.1" cy="11.4" r="1.1"/><circle cx="347.1" cy="-0.7" r="1.2"/><circle cx="331.7" cy="29.7" r="1.6"/><circle cx="378.2" cy="14.2" r="1.1"/><circle cx="308.2" cy="29.7" r="1.6"/><circle cx="335.8" cy="20.6" r="1.3"/><circle cx="309.3" cy="20.4" r="1.9"/><circle cx="318.2" cy="12.5" r="1.6"/><circle cx="302.8" cy="24.5" r="1.7"/><circle cx="336.5" cy="5.6" r="2.0"/><circle cx="315.3" cy="25.2" r="1.1"/><circle cx="305.4" cy="23.3" r="1.2"/><circle cx="385.7" cy="14.9" r="1.0"/><circle cx="305.6" cy="12.3" r="1.6"/><circle cx="385.4" cy="3.7" r="1.3"/><circle cx="304.4" cy="30.2" r="1.0"/><circle cx="324.3" cy="27.7" r="1.9"/></g><g stroke="#4a3933" stroke-width=".8" opacity=".6" fill="none" stroke-linecap="round" filter="url(#b2)"><path d="M366.8 2.9 l5.3 -2.7"/><path d="M329.8 -0.6 l3.4 -1.3"/><path d="M360.2 10.3 l2.4 -1.9"/><path d="M364.6 29.1 l3.2 -2.6"/><path d="M370.8 11.5 l2.0 -2.1"/><path d="M368.2 24.9 l4.3 -1.3"/><path d="M346.3 6.2 l5.2 -2.7"/><path d="M354.2 25.2 l5.0 -1.5"/><path d="M319.0 16.5 l2.4 0.6"/><path d="M325.2 26.2 l2.8 -1.3"/><path d="M314.9 12.6 l1.5 -2.3"/><path d="M362.6 8.0 l2.5 -1.6"/><path d="M337.9 12.7 l4.5 -0.1"/><path d="M326.0 28.7 l3.3 -4.3"/><path d="M373.4 28.0 l3.6 -3.6"/><path d="M373.8 19.3 l1.1 -1.7"/><path d="M386.1 20.0 l2.0 -2.2"/><path d="M303.6 6.5 l4.5 -2.4"/><path d="M304.6 27.9 l3.8 -3.5"/><path d="M379.9 18.5 l5.1 0.0"/><path d="M380.2 24.2 l4.1 -3.5"/><path d="M359.7 16.0 l4.7 -1.7"/><path d="M379.0 16.8 l2.4 -1.8"/><path d="M303.2 14.8 l2.1 -0.7"/><path d="M303.7 14.7 l3.9 -0.8"/><path d="M377.0 -0.8 l5.1 -1.6"/><path d="M346.4 20.3 l4.9 -2.3"/><path d="M331.7 29.7 l2.3 -0.1"/><path d="M353.9 -0.1 l4.4 0.1"/><path d="M384.0 9.6 l5.8 -1.4"/><path d="M338.4 27.7 l2.1 0.2"/><path d="M352.8 9.8 l4.9 -2.4"/><path d="M337.4 15.8 l3.9 -3.2"/><path d="M333.4 12.5 l4.1 1.0"/><path d="M318.9 25.5 l3.5 -0.9"/><path d="M316.7 15.2 l5.9 -0.1"/><path d="M369.8 9.6 l2.8 -1.7"/><path d="M348.8 19.3 l3.0 -4.1"/><path d="M362.7 27.3 l2.5 -3.3"/><path d="M308.4 28.5 l4.4 -0.1"/><path d="M369.5 28.1 l4.4 -0.3"/><path d="M352.9 21.3 l4.4 0.1"/><path d="M310.7 20.3 l3.8 0.5"/><path d="M382.2 20.0 l3.4 0.8"/><path d="M369.2 17.0 l2.6 -1.6"/><path d="M332.0 9.2 l3.7 -0.1"/><path d="M384.3 0.7 l2.5 -3.5"/><path d="M301.1 24.9 l4.0 1.6"/><path d="M334.5 -0.5 l3.5 -0.4"/><path d="M384.6 30.4 l3.6 -1.5"/><path d="M299.4 19.6 l2.0 -2.0"/><path d="M358.7 2.9 l3.8 -4.5"/><path d="M377.7 3.1 l2.1 0.2"/><path d="M313.7 22.5 l1.7 -2.2"/><path d="M368.0 21.8 l5.4 0.5"/><path d="M297.6 19.1 l4.6 -1.5"/><path d="M384.1 7.1 l5.8 0.4"/><path d="M355.4 25.2 l2.0 -1.2"/><path d="M363.4 4.3 l5.2 -1.5"/><path d="M295.1 10.8 l4.1 -1.4"/><path d="M358.0 3.6 l4.7 -2.3"/><path d="M354.8 19.2 l3.4 -1.5"/><path d="M369.2 29.2 l5.1 -0.8"/><path d="M318.8 0.9 l5.9 0.3"/><path d="M287.5 10.5 C292.0 15.0 295.0 22.0 306.0 27.0" stroke-width="1.1"/><path d="M291.5 1.0 L292.5 11.0" stroke-width=".6"/><path d="M266.0 8.5 L289.0 15.0" stroke-width=".5"/><path d="M300.0 3.0 L314.0 11.0" stroke-width=".5"/><path d="M321.0 20.0 C344.0 17.0 364.0 11.0 385.0 3.0" stroke-width="1.3"/><path d="M337.0 28.0 C349.0 22.0 371.0 21.0 389.0 14.0" stroke-width="1.2"/><path d="M371.0 1.0 L384.0 11.0" stroke-width="1.1"/><path d="M345.0 1.0 L355.0 13.0" stroke-width="1"/></g><rect x="264" y="0" width="125" height=".7" fill="#77808c" opacity=".6"/></g></svg>
</div>
<div id="sn">
  <svg class="cv" style="left:37px" viewBox="0 0 6 9"><path d="M.8.7 4.8 4.5.8 8.3"/></svg><a style="left:47px">鉄道<span class="k">トップ</span></a>
  <svg class="cv" style="left:127px" viewBox="0 0 6 9"><path d="M.8.7 4.8 4.5.8 8.3"/></svg><a style="left:137px">組織</a>
  <svg class="cv" style="left:175px" viewBox="0 0 6 9"><path d="M.8.7 4.8 4.5.8 8.3"/></svg><a style="left:185px">報道発表資料</a>
  <svg class="cv" style="left:279px" viewBox="0 0 6 9"><path d="M.8.7 4.8 4.5.8 8.3"/></svg><a style="left:289px">統計・<span class="k">デ</span>ー<span class="k">タ</span></a>
</div>

<div id="bc"><a><span class="k">ホ</span>ー<span class="k">ム</span></a> &gt; <a>政策・仕事</a> &gt; <a>鉄道</a> &gt; 地域鉄道<span class="k">に</span>対<span class="k">する</span>国<span class="k">の</span>支援制度</div>
<div id="h1"><svg><defs><pattern id="st" width="4" height="4" patternUnits="userSpaceOnUse"><rect width="4" height="4" fill="#e2f0f2"/><path d="M-1 1 1-1M-1 5 5-1M3 5 5 3" stroke="#fff" stroke-width=".9"/></pattern></defs><rect width="1204" height="43" fill="url(#st)"/></svg><span>地域鉄道<span class="k">に</span>対<span class="k">する</span>国<span class="k">の</span>支援制度</span></div>
<div id="p1">地域鉄道<span class="k">を</span>活性化<span class="k">するために</span>、地域<span class="k">が</span>主体<span class="k">となって</span>行<span class="k">う</span>意欲的<span class="k">な</span>取組<span class="k">みに</span>対<span class="k">して</span>、積極的<span class="k">に</span>支援<span class="k">していくこととしております</span>。</div>
<div id="h2">各種支援制度<span class="k">の</span>紹介</div>

<div class="h3" style="top:539px">安全輸送<span class="k">の</span>確保（安全性<span class="k">の</span>向上<span class="k">に</span>資<span class="k">する</span>設備更新等）</div>
<div class="tx" style="top:590px"><span class="sym">○</span> <a>支援制度<span class="k">の</span>概要</a></div>
<div class="tx" style="top:612px">【鉄道施設総合安全対策事業費補助（鉄道軌道安全輸送設備等整備事業）、地域公共交通確保維持改善事業費補助金（鉄道軌道安全輸送設備等整備事業）】</div>

<div class="h3" style="top:679px">移動<span class="k">の</span>利便性向上・利用環境<span class="k">の</span>改善（<span class="k">インバウンド</span>対応型鉄軌道車両、<span class="la">LRT</span><span class="k">システム</span>、全国共通<span class="la">IC</span><span class="k">カ</span>ー<span class="k">ド</span>）</div>
<div class="tx" style="top:730px"><b><span class="sym">＜</span><span class="k">インバウンド</span>対応型鉄軌道車両<span class="sym">＞</span></b></div>
<div class="tx" style="top:753px"><span class="sym">○</span> <a>支援制度<span class="k">の</span>概要</a></div>
<div class="tx" style="top:775px">【訪日外国人旅行者受入環境整備緊急対策事業費補助金（<span class="k">インバウンド</span>対応型鉄軌道車両整備事業）】</div>

</body>
</html>
